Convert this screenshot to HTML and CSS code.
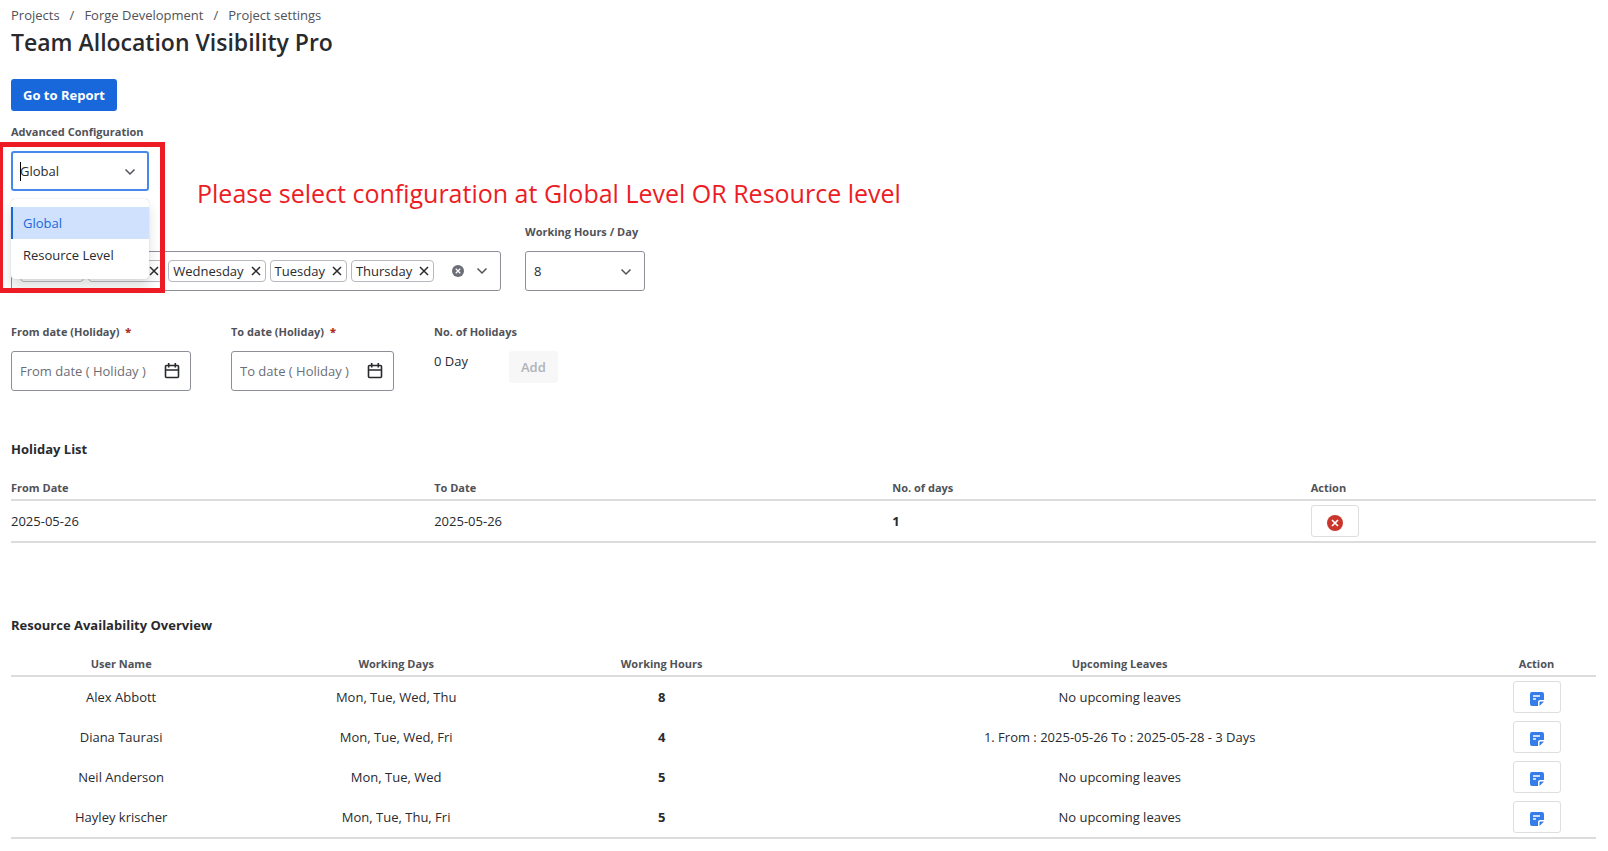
FILE: index.html
```html
<!DOCTYPE html>
<html lang="en">
<head>
    <meta charset="UTF-8">
    <meta name="viewport" content="width=device-width, initial-scale=1.0">
    <title>Team Allocation Visibility Pro</title>
    <link rel="stylesheet" href="styles.css">
</head>
<body>
    <!-- Shared icons -->
    <svg class="sprite" aria-hidden="true">
        <symbol id="chevron" viewBox="0 0 12 8">
            <path d="M1.5 1.5 6 6l4.500-4.500" fill="none" stroke="currentColor" stroke-width="1.500"/>
        </symbol>
        <symbol id="cross" viewBox="0 0 10 10">
            <path d="M1 1l8 8M9 1L1 9" fill="none" stroke="currentColor" stroke-width="1.500"/>
        </symbol>
        <symbol id="clear" viewBox="0 0 16 16">
            <circle cx="8" cy="8" r="8" fill="currentColor"/>
            <path d="M5 5l6 6M11 5l-6 6" fill="none" stroke="#fff" stroke-width="1.700"/>
        </symbol>
        <symbol id="calendar" viewBox="0 0 16 18">
            <path d="M2.500 3.500h11a1 1 0 0 1 1 1v10a1 1 0 0 1-1 1h-11a1 1 0 0 1-1-1v-10a1 1 0 0 1 1-1zM1.500 8h13M4.700 1v4.500M11.300 1v4.500" fill="none" stroke="currentColor" stroke-width="1.600"/>
        </symbol>
        <symbol id="note" viewBox="0 0 16 16">
            <path d="M3 1h10a2 2 0 0 1 2 2v6h-4a2 2 0 0 0-2 2v4H3a2 2 0 0 1-2-2V3a2 2 0 0 1 2-2z" fill="currentColor"/>
            <path d="M15 10.500L10.500 15v-3.500a1 1 0 0 1 1-1z" fill="currentColor"/>
            <path d="M4 5h7M4 8h3" stroke="#fff" stroke-width="1.300"/>
        </symbol>
    </svg>

    <!-- Header -->
    <nav class="breadcrumbs" aria-label="Breadcrumbs">
        <a href="#">Projects</a>
        <span>/</span>
        <a href="#">Forge Development</a>
        <span>/</span>
        <a href="#">Project settings</a>
    </nav>
    <h1>Team Allocation Visibility Pro</h1>
    <button class="btn btn-primary" type="button">Go to Report</button>

    <!-- Configuration -->
    <form class="config">
        <div class="row">
            <div class="field field-level">
                <label for="level">Advanced Configuration</label>
                <div class="control">
                    <select id="level" class="box focused">
                        <option selected>Global</option>
                        <option>Resource Level</option>
                    </select>
                    <span class="caret"></span>
                    <svg class="chevron"><use href="#chevron"/></svg>
                    <ul class="menu" role="listbox" aria-label="Advanced Configuration">
                        <li class="selected" role="option" aria-selected="true">Global</li>
                        <li role="option" aria-selected="false">Resource Level</li>
                    </ul>
                    <div class="highlight"></div>
                </div>
            </div>
            <p class="hint">Please select configuration at Global Level OR Resource level</p>
        </div>

        <div class="row row-end">
            <div class="field field-days" role="group" aria-label="Working Days">
                <div class="box chips">
                    <span class="chip">Friday <button type="button" aria-label="Remove Friday"><svg><use href="#cross"/></svg></button></span>
                    <span class="chip">Monday <button type="button" aria-label="Remove Monday"><svg><use href="#cross"/></svg></button></span>
                    <span class="chip">Wednesday <button type="button" aria-label="Remove Wednesday"><svg><use href="#cross"/></svg></button></span>
                    <span class="chip">Tuesday <button type="button" aria-label="Remove Tuesday"><svg><use href="#cross"/></svg></button></span>
                    <span class="chip">Thursday <button type="button" aria-label="Remove Thursday"><svg><use href="#cross"/></svg></button></span>
                    <button class="clear" type="button" aria-label="Clear all"><svg><use href="#clear"/></svg></button>
                    <svg class="chevron"><use href="#chevron"/></svg>
                </div>
            </div>
            <div class="field field-hours">
                <label for="hours">Working Hours / Day</label>
                <div class="control">
                    <select id="hours" class="box">
                        <option>8</option>
                    </select>
                    <svg class="chevron"><use href="#chevron"/></svg>
                </div>
            </div>
        </div>

        <div class="row">
            <div class="field field-from">
                <label for="from">From date (Holiday) <b>*</b></label>
                <div class="control">
                    <input id="from" class="box" type="text" placeholder="From date ( Holiday )">
                    <svg class="calendar"><use href="#calendar"/></svg>
                </div>
            </div>
            <div class="field field-to">
                <label for="to">To date (Holiday) <b>*</b></label>
                <div class="control">
                    <input id="to" class="box" type="text" placeholder="To date ( Holiday )">
                    <svg class="calendar"><use href="#calendar"/></svg>
                </div>
            </div>
            <div class="field field-count">
                <span class="label">No. of Holidays</span>
                <span class="count">0 Day</span>
            </div>
            <button class="btn btn-add" type="button" disabled>Add</button>
        </div>
    </form>

    <!-- Holiday List -->
    <section class="holidays">
        <h2>Holiday List</h2>
        <table>
            <thead>
                <tr>
                    <th>From Date</th>
                    <th>To Date</th>
                    <th>No. of days</th>
                    <th>Action</th>
                </tr>
            </thead>
            <tbody>
                <tr>
                    <td>2025-05-26</td>
                    <td>2025-05-26</td>
                    <td><strong>1</strong></td>
                    <td><button class="btn btn-icon delete" type="button" aria-label="Delete holiday"><svg><use href="#clear"/></svg></button></td>
                </tr>
            </tbody>
        </table>
    </section>

    <!-- Resource Availability -->
    <section class="resources">
        <h2>Resource Availability Overview</h2>
        <table>
            <thead>
                <tr>
                    <th>User Name</th>
                    <th>Working Days</th>
                    <th>Working Hours</th>
                    <th>Upcoming Leaves</th>
                    <th>Action</th>
                </tr>
            </thead>
            <tbody>
                <tr>
                    <td>Alex Abbott</td>
                    <td>Mon, Tue, Wed, Thu</td>
                    <td><strong>8</strong></td>
                    <td>No upcoming leaves</td>
                    <td><button class="btn btn-icon" type="button" aria-label="Edit Alex Abbott"><svg><use href="#note"/></svg></button></td>
                </tr>
                <tr>
                    <td>Diana Taurasi</td>
                    <td>Mon, Tue, Wed, Fri</td>
                    <td><strong>4</strong></td>
                    <td>1. From : 2025-05-26 To : 2025-05-28 - 3 Days</td>
                    <td><button class="btn btn-icon" type="button" aria-label="Edit Diana Taurasi"><svg><use href="#note"/></svg></button></td>
                </tr>
                <tr>
                    <td>Neil Anderson</td>
                    <td>Mon, Tue, Wed</td>
                    <td><strong>5</strong></td>
                    <td>No upcoming leaves</td>
                    <td><button class="btn btn-icon" type="button" aria-label="Edit Neil Anderson"><svg><use href="#note"/></svg></button></td>
                </tr>
                <tr>
                    <td>Hayley krischer</td>
                    <td>Mon, Tue, Thu, Fri</td>
                    <td><strong>5</strong></td>
                    <td>No upcoming leaves</td>
                    <td><button class="btn btn-icon" type="button" aria-label="Edit Hayley krischer"><svg><use href="#note"/></svg></button></td>
                </tr>
            </tbody>
        </table>
    </section>
</body>
</html>
```

FILE: styles.css
```css
* {
    margin: 0;
    padding: 0;
    box-sizing: border-box;
    font-family: 'Segoe UI', 'Open Sans', sans-serif;
}

:root {
    --text: #292a2e;
    --text-subtle: #505258;
    --text-muted: #6b6e76;
    --border: #8c8f97;
    --border-light: #dddee1;
    --line: #dcdcdd;
    --blue: #1868db;
    --blue-focus: #4688ec;
    --blue-light: #cfe1fd;
    --red: #ed1c24;
    --danger: #c9372c;
}

body {
    padding: 0 12px 0 11px;
    background-color: #ffffff;
    color: var(--text);
    font-size: 13px;
    line-height: 20px;
}

.sprite {
    display: none;
}

/* Header */
.breadcrumbs {
    display: flex;
    gap: 10px;
    padding: 5px 0 3px;
    color: var(--text-subtle);
}

.breadcrumbs a {
    color: inherit;
    text-decoration: none;
}

h1 {
    margin-bottom: 23px;
    font-size: 23px;
    font-weight: 600;
    line-height: 28px;
}

h2 {
    margin-bottom: 21px;
    font-size: 13px;
    font-weight: 700;
}

/* Buttons */
.btn {
    height: 32px;
    padding: 0 12px;
    border: none;
    border-radius: 3px;
    font-size: 13px;
    font-weight: 600;
}

.btn-primary {
    background-color: var(--blue);
    color: #ffffff;
    font-weight: 700;
}

.btn-add {
    margin-top: 27px;
    background-color: #f7f7f8;
    color: #b0b2b8;
}

.btn-icon {
    display: inline-flex;
    align-items: center;
    justify-content: center;
    width: 48px;
    padding: 4px 0 0;
    border: 1px solid var(--border-light);
    background-color: #ffffff;
    color: #357de8;
    vertical-align: top;
}

.btn-icon svg {
    width: 16px;
    height: 16px;
}

.btn-icon.delete {
    color: var(--danger);
}

/* Form */
.config {
    display: flex;
    flex-direction: column;
    gap: 33px;
    padding-top: 13px;
}

.row {
    display: flex;
    align-items: flex-start;
}

.row-end {
    align-items: flex-end;
}

.field label,
.label {
    display: block;
    margin-bottom: 11px;
    color: var(--text-subtle);
    font-size: 11px;
    font-weight: 700;
    line-height: 16px;
    white-space: nowrap;
}

.field b {
    margin-left: 3px;
    color: #ae2e24;
}

.field-level {
    width: 138px;
}

.field-days {
    width: 490px;
    margin-right: 24px;
}

.field-hours {
    width: 120px;
}

.field-from {
    width: 180px;
    margin-right: 40px;
}

.field-to {
    width: 163px;
    margin-right: 40px;
}

.field-count {
    width: 75px;
}

.count {
    display: block;
}

.control {
    position: relative;
}

.box {
    display: block;
    width: 100%;
    height: 40px;
    padding: 0 8px;
    border: 1px solid var(--border);
    border-radius: 3px;
    outline: none;
    appearance: none;
    background-color: #ffffff;
    color: var(--text);
    font-size: 13px;
}

.box.focused {
    padding: 0 7px;
    border: 2px solid var(--blue-focus);
}

.box::placeholder {
    color: var(--text-muted);
    opacity: 1;
}

.chevron {
    width: 12px;
    height: 8px;
    color: var(--text-subtle);
}

.control .chevron {
    position: absolute;
    top: 17px;
    right: 13px;
}

.calendar {
    position: absolute;
    top: 11px;
    right: 11px;
    width: 16px;
    height: 18px;
}

.caret {
    position: absolute;
    top: 11px;
    left: 9px;
    width: 1px;
    height: 19px;
    background-color: #000000;
}

/* Open menu */
.menu {
    position: absolute;
    top: 48px;
    left: 0;
    z-index: 2;
    width: 100%;
    padding: 8px 0;
    border-radius: 4px;
    background-color: #ffffff;
    box-shadow: 0 8px 12px rgba(30, 31, 33, 0.15), 0 0 1px rgba(30, 31, 33, 0.31);
    list-style: none;
}

.menu li {
    padding: 6px 12px;
    white-space: nowrap;
}

.menu .selected {
    padding-left: 10px;
    border-left: 2px solid var(--blue);
    background-color: var(--blue-light);
    color: var(--blue);
}

.highlight {
    position: absolute;
    top: -9px;
    left: -13px;
    z-index: 3;
    width: 167px;
    height: 151px;
    border: 5px solid var(--red);
    pointer-events: none;
}

.hint {
    margin: 52px 0 0 48px;
    height: 15px;
    color: var(--red);
    font-size: 25px;
    line-height: 34px;
    white-space: nowrap;
}

/* Chips */
.chips {
    display: flex;
    align-items: center;
    gap: 4px;
    padding-right: 12px;
}

.chip {
    display: flex;
    align-items: center;
    gap: 7px;
    height: 22px;
    padding: 0 4px;
    border: 1px solid #b7b9be;
    border-radius: 4px;
}

.chip button,
.clear {
    display: flex;
    border: none;
    background: none;
    color: var(--text);
}

.chip svg {
    width: 10px;
    height: 10px;
}

.clear {
    margin-left: auto;
    margin-right: 8px;
    color: var(--text-muted);
}

.clear svg {
    width: 12px;
    height: 12px;
}

/* Tables */
table {
    width: 100%;
    table-layout: fixed;
    border-spacing: 0;
    border-bottom: 2px solid var(--line);
}

th {
    padding-bottom: 3px;
    border-bottom: 2px solid var(--line);
    color: var(--text-subtle);
    font-size: 11px;
    font-weight: 700;
    line-height: 16px;
    text-align: left;
}

td {
    height: 40px;
    padding: 4px 0;
}

.holidays {
    padding-top: 48px;
}

.holidays th:nth-child(1) {
    width: 26.7%;
}

.holidays th:nth-child(2) {
    width: 28.9%;
}

.holidays th:nth-child(3) {
    width: 26.4%;
}

.resources {
    padding-top: 72px;
}

.resources th,
.resources td {
    text-align: center;
}

.resources th:nth-child(1) {
    width: 13.9%;
}

.resources th:nth-child(2) {
    width: 20.8%;
}

.resources th:nth-child(3) {
    width: 12.7%;
}

.resources th:nth-child(4) {
    width: 45.1%;
}
```
